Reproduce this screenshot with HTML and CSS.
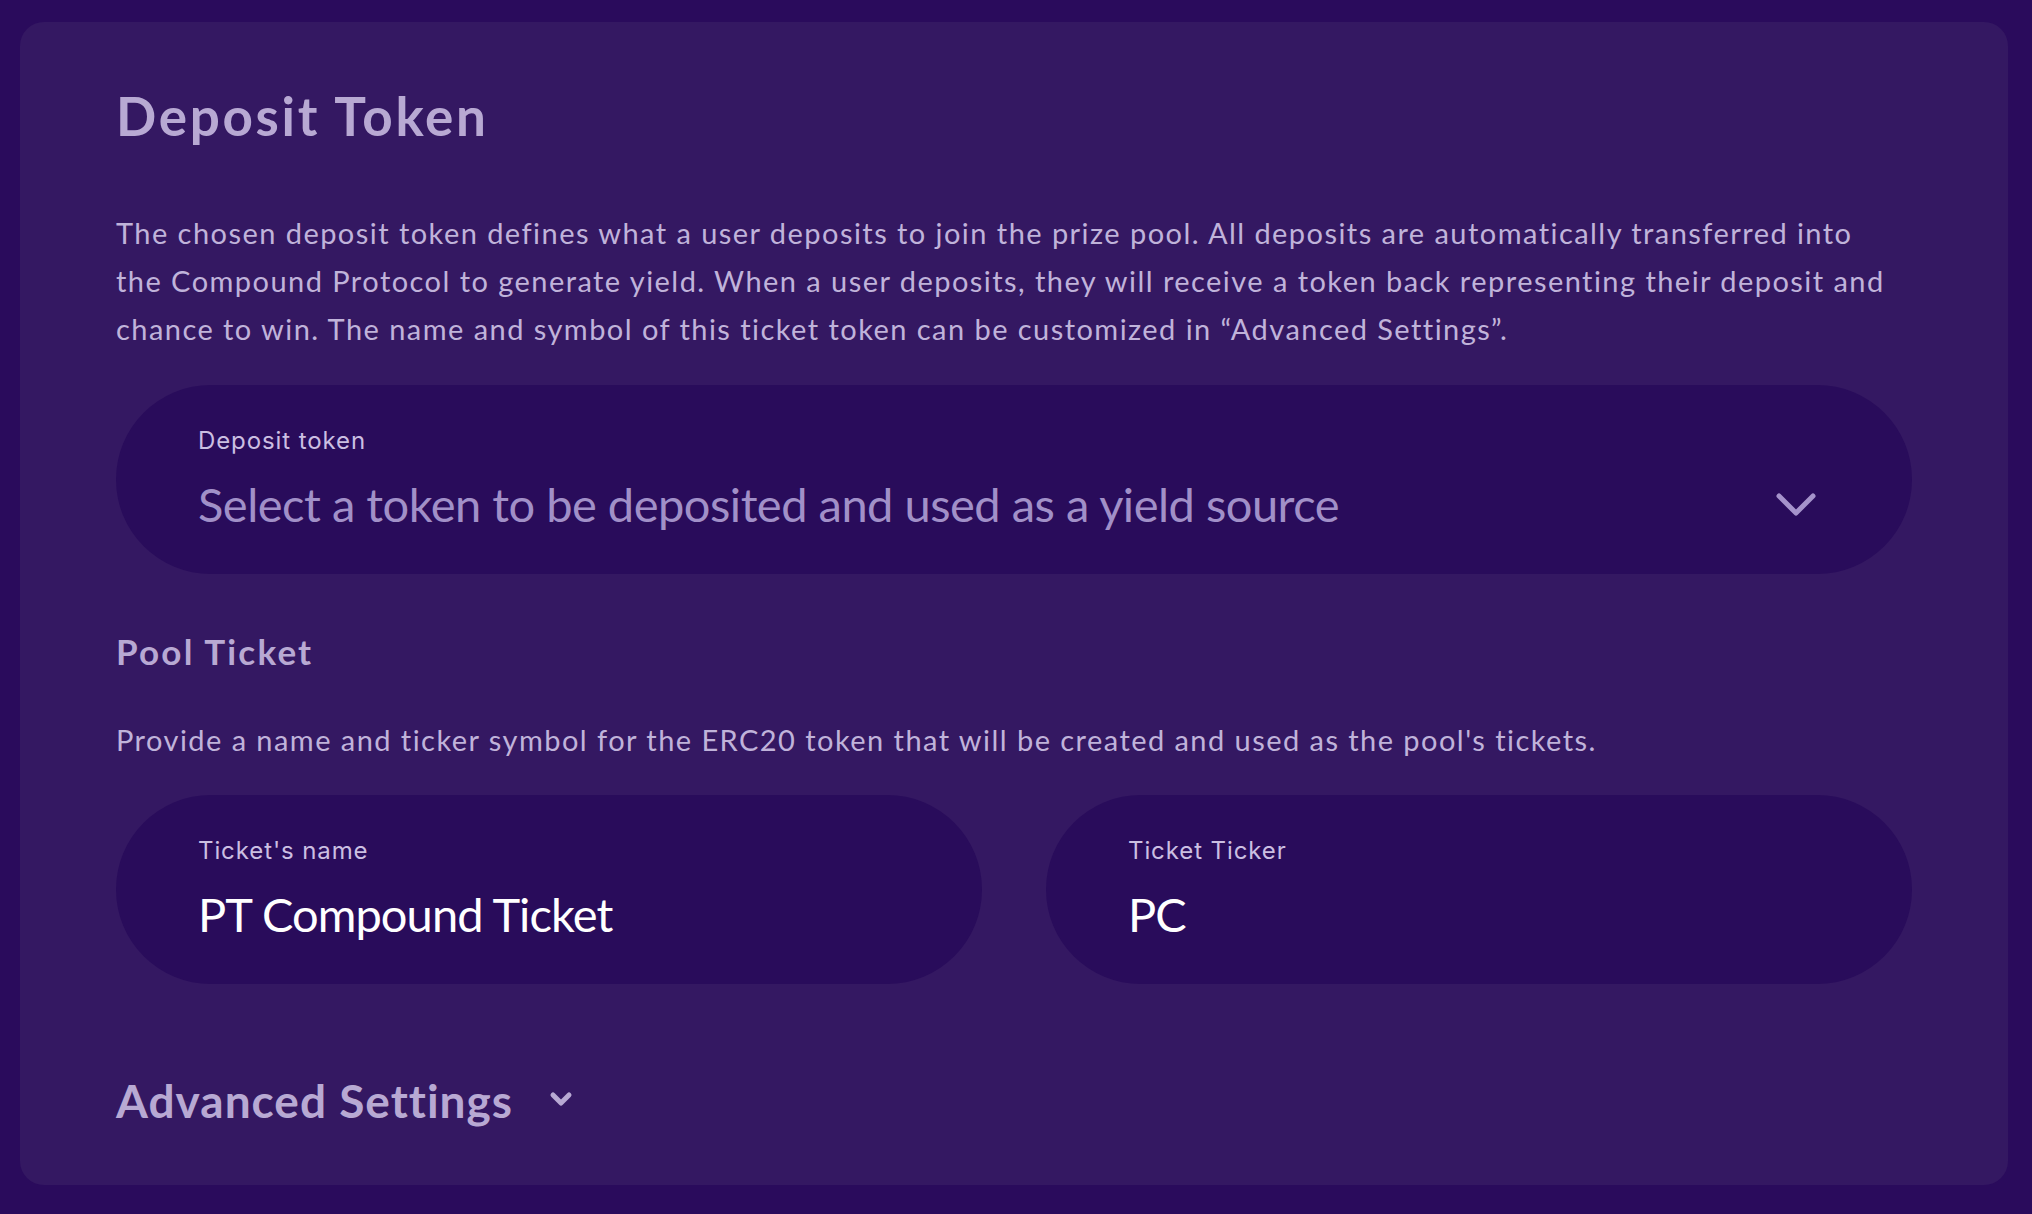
FILE: index.html
```html
<!DOCTYPE html>
<html lang="en">
<head>
<meta charset="utf-8">
<title>Deposit Token</title>
<link rel="stylesheet" href="styles.css">
</head>
<body>
<main class="page">
  <section class="card">
    <h1 class="title">Deposit Token</h1>
    <p class="desc">The chosen deposit token defines what a user deposits to join the prize pool. All deposits are automatically transferred into<br>the Compound Protocol to generate yield. When a user deposits, they will receive a token back representing their deposit and<br>chance to win. The name and symbol of this ticket token can be customized in “Advanced Settings”.</p>

    <div class="field field-select">
      <div class="field-body">
        <div class="field-label">Deposit token</div>
        <div class="field-value placeholder">Select a token to be deposited and used as a yield source</div>
      </div>
      <svg class="chevron" viewBox="0 0 42 26" aria-hidden="true"><path d="M4 4 L21 21 L38 4" /></svg>
    </div>

    <h2 class="subtitle">Pool Ticket</h2>
    <p class="desc desc-pool">Provide a name and ticker symbol for the ERC20 token that will be created and used as the pool's tickets.</p>

    <div class="field-row">
      <div class="field">
        <div class="field-body">
          <div class="field-label">Ticket's name</div>
          <div class="field-value">PT Compound Ticket</div>
        </div>
      </div>
      <div class="field">
        <div class="field-body">
          <div class="field-label">Ticket Ticker</div>
          <div class="field-value">PC</div>
        </div>
      </div>
    </div>

    <div class="advanced">
      <span class="advanced-text">Advanced Settings</span>
      <svg class="chevron-small" viewBox="0 0 24 16" aria-hidden="true"><path d="M4 4 L12 12 L20 4" /></svg>
    </div>
  </section>
</main>
</body>
</html>
```

FILE: styles.css
```css
html, body {
  margin: 0;
  padding: 0;
}

body {
  background: #2a0b5c;
  font-family: Lato, "Open Sans", sans-serif;
  color: #bfb1d9;
}

.page {
  padding: 22px 24px 30px 20px;
}

.card {
  background: #341862;
  border-radius: 24px;
  padding: 62px 96px 56px 96px;
}

.title {
  margin: 0;
  font-family: Lato, sans-serif;
  font-weight: 700;
  font-size: 53px;
  line-height: 64px;
  letter-spacing: 2.7px;
  color: #b8a9d3;
}

.desc {
  margin: 61px 0 0 0;
  font-size: 29px;
  line-height: 48px;
  font-weight: 400;
  letter-spacing: 1.45px;
  color: #c0b3da;
  white-space: nowrap;
}

.field {
  background: #290c5b;
  border-radius: 95px;
  height: 189px;
  box-sizing: border-box;
  padding: 42px 82px 0 82px;
  display: flex;
  align-items: flex-start;
}

.field-select {
  margin-top: 32px;
  padding-right: 95px;
}

.field-body {
  flex: 1;
  min-width: 0;
}

.field-label {
  font-family: Inter, sans-serif;
  font-size: 24px;
  line-height: 28px;
  color: #cbbfe2;
  letter-spacing: 0.9px;
}

.field-value {
  margin-top: 19px;
  font-size: 47px;
  line-height: 60px;
  letter-spacing: -0.9px;
  color: #ffffff;
  white-space: nowrap;
}

.field-value.placeholder {
  color: #a190c8;
  letter-spacing: -0.5px;
}

.chevron {
  width: 42px;
  height: 26px;
  margin-top: 65px;
  fill: none;
  stroke: #a593cb;
  stroke-width: 5;
  stroke-linecap: round;
  stroke-linejoin: round;
}

.subtitle {
  margin: 55px 0 0 0;
  font-size: 35px;
  line-height: 44px;
  font-weight: 700;
  letter-spacing: 2.2px;
  color: #b8a9d3;
}

.desc-pool {
  margin-top: 43px;
}

.field-row {
  margin-top: 31px;
  display: grid;
  grid-template-columns: 1fr 1fr;
  gap: 64px;
}

.advanced {
  margin-top: 89px;
  display: flex;
  align-items: center;
  gap: 36px;
}

.advanced-text {
  font-size: 46px;
  line-height: 56px;
  font-weight: 700;
  letter-spacing: 1px;
  color: #b8a9d3;
}

.chevron-small {
  width: 24px;
  height: 16px;
  margin-top: -4px;
  fill: none;
  stroke: #b8a9d3;
  stroke-width: 5;
  stroke-linecap: round;
  stroke-linejoin: round;
}
```
